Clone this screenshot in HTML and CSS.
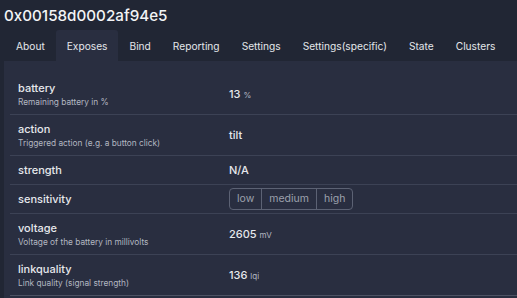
FILE: index.html
```html
<!DOCTYPE html>
<html>
<head>
<meta charset="utf-8">
<link rel="stylesheet" href="styles.css">
</head>
<body>
<div class="page">
  <h1 class="title">0x00158d0002af94e5</h1>
  <nav class="tabs">
    <a class="tab">About</a>
    <a class="tab active">Exposes</a>
    <a class="tab">Bind</a>
    <a class="tab">Reporting</a>
    <a class="tab">Settings</a>
    <a class="tab">Settings(specific)</a>
    <a class="tab">State</a>
    <a class="tab">Clusters</a>
  </nav>
  <div class="card">
    <div class="table">
      <div class="row">
        <div class="name-cell"><div class="name">battery</div><div class="desc">Remaining battery in %</div></div>
        <div class="value">13 <span class="unit">%</span></div>
      </div>
      <div class="row">
        <div class="name-cell"><div class="name">action</div><div class="desc">Triggered action (e.g. a button click)</div></div>
        <div class="value">tilt</div>
      </div>
      <div class="row">
        <div class="name-cell"><div class="name">strength</div></div>
        <div class="value">N/A</div>
      </div>
      <div class="row row-compact">
        <div class="name-cell"><div class="name">sensitivity</div></div>
        <div class="value">
          <div class="btn-group">
            <span class="btn">low</span><span class="btn">medium</span><span class="btn">high</span>
          </div>
        </div>
      </div>
      <div class="row">
        <div class="name-cell"><div class="name">voltage</div><div class="desc">Voltage of the battery in millivolts</div></div>
        <div class="value">2605 <span class="unit">mV</span></div>
      </div>
      <div class="row">
        <div class="name-cell"><div class="name">linkquality</div><div class="desc">Link quality (signal strength)</div></div>
        <div class="value">136 <span class="unit">lqi</span></div>
      </div>
    </div>
  </div>
</div>
</body>
</html>
```

FILE: styles.css
```css
html, body {
  margin: 0;
  padding: 0;
  background: #212634;
  overflow: hidden;
}
body {
  font-family: Inter, "Liberation Sans", sans-serif;
  color: #e9eaee;
  height: 298px;
}
.page {
  padding: 7px 0 0 4px;
}
.title {
  margin: 0;
  font-size: 15.2px;
  line-height: 18px;
  font-weight: 500;
  color: #f3f4f6;
}
.tabs {
  display: flex;
  margin-top: 5px;
  height: 31px;
  padding-left: 1px;
}
.tab {
  display: flex;
  align-items: center;
  padding: 0 11px;
  font-size: 10.2px;
  color: #e4e6eb;
  border-radius: 3px 3px 0 0;
}
.tab.active {
  background: #292e40;
}
.card {
  background: #292e40;
  padding: 13px 0 0 6px;
  height: 237px;
  box-sizing: border-box;
  overflow: hidden;
}
.row {
  display: grid;
  grid-template-columns: 211px 1fr;
  align-items: center;
  padding: 6px 0;
  border-bottom: 1px solid #3c4255;
}
.row:last-child {
  border-bottom-color: #4d5263;
}
.row-compact {
  padding: 3px 0;
}
.name-cell {
  padding-left: 8px;
}
.name {
  font-size: 11px;
  line-height: 16px;
  font-weight: 500;
  color: #e6e8ec;
}
.desc {
  font-size: 8.3px;
  line-height: 12px;
  color: #b3b7c1;
}
.value {
  padding-left: 8px;
  font-size: 11px;
  line-height: 16px;
  font-weight: 500;
  color: #e6e8ec;
}
.unit {
  font-size: 8px;
  font-weight: 400;
  color: #b3b7c1;
}
.btn-group {
  display: inline-flex;
  height: 22px;
  border: 1px solid #5c6274;
  border-radius: 4px;
  box-sizing: border-box;
}
.btn {
  display: flex;
  align-items: center;
  padding: 0 7px;
  font-size: 10.5px;
  font-weight: 400;
  color: #9ca1ad;
}
.btn + .btn {
  border-left: 1px solid #5c6274;
}
```
